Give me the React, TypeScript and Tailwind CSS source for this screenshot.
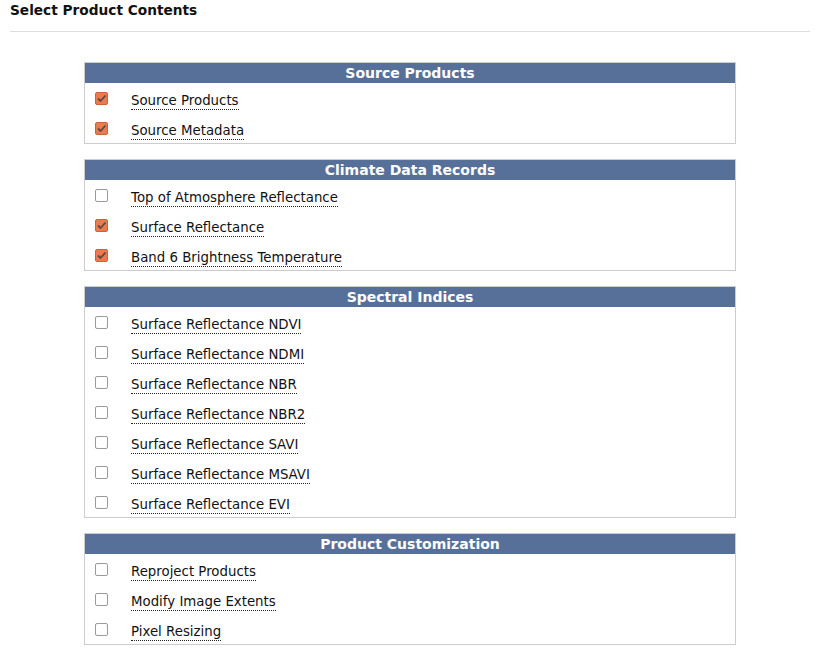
import React from "react";

type Item = { label: string; checked: boolean };
type Section = { title: string; items: Item[] };

const sections: Section[] = [
  {
    title: "Source Products",
    items: [
      { label: "Source Products", checked: true },
      { label: "Source Metadata", checked: true },
    ],
  },
  {
    title: "Climate Data Records",
    items: [
      { label: "Top of Atmosphere Reflectance", checked: false },
      { label: "Surface Reflectance", checked: true },
      { label: "Band 6 Brightness Temperature", checked: true },
    ],
  },
  {
    title: "Spectral Indices",
    items: [
      { label: "Surface Reflectance NDVI", checked: false },
      { label: "Surface Reflectance NDMI", checked: false },
      { label: "Surface Reflectance NBR", checked: false },
      { label: "Surface Reflectance NBR2", checked: false },
      { label: "Surface Reflectance SAVI", checked: false },
      { label: "Surface Reflectance MSAVI", checked: false },
      { label: "Surface Reflectance EVI", checked: false },
    ],
  },
  {
    title: "Product Customization",
    items: [
      { label: "Reproject Products", checked: false },
      { label: "Modify Image Extents", checked: false },
      { label: "Pixel Resizing", checked: false },
    ],
  },
];

function Box({ checked }: { checked: boolean }) {
  if (checked) {
    return (
      <span className="flex h-[13px] w-[13px] items-center justify-center rounded-[2px] border border-[#c8633c] bg-[#ec7a4e]">
        <svg width="11" height="11" viewBox="0 0 11 11">
          <path d="M2 5.5 L4.5 8 L9.5 2.5" fill="none" stroke="#5a4a44" strokeWidth="1.8" />
        </svg>
      </span>
    );
  }
  return <span className="h-[13px] w-[13px] rounded-[2px] border border-[#9a9a9a] bg-white" />;
}

export default function App() {
  return (
    <div className="min-h-[655px] bg-white px-[10px] pr-[7px] font-['DejaVu_Sans',Verdana,sans-serif] text-[#111]">
      <div className="pt-[1px]">
        <h1 className="text-[13.7px] font-bold leading-[18px]">Select Product Contents</h1>
      </div>
      <div className="mt-[12px] h-px w-[800px] bg-[#dddddd]" />
      <div className="mx-auto mt-[30px] flex w-[652px] flex-col gap-[15px]">
        {sections.map((s) => (
          <div key={s.title} className="border border-[#cccccc]">
            <div className="flex h-[20px] items-center justify-center bg-[#57709a] text-[14px] font-bold text-white">
              {s.title}
            </div>
            <div className="flex flex-col">
              {s.items.map((it) => (
                <div key={it.label} className="flex h-[30px] items-center pt-[6px]">
                  <div className="ml-[10px] flex w-[36px] -translate-y-[3px]">
                    <Box checked={it.checked} />
                  </div>
                  <span className="border-b border-dotted border-[#222] text-[13.33px] leading-[16px] text-[#111]">
                    {it.label}
                  </span>
                </div>
              ))}
            </div>
          </div>
        ))}
      </div>
    </div>
  );
}
